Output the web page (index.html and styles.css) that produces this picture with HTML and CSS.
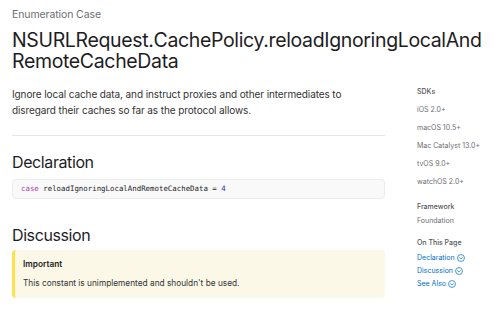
FILE: index.html
```html
<!DOCTYPE html>
<html lang="en">
<head>
    <meta charset="UTF-8">
    <meta name="viewport" content="width=device-width, initial-scale=1.0">
    <title>NSURLRequest.CachePolicy.reloadIgnoringLocalAndRemoteCacheData</title>
    <link rel="stylesheet" href="styles.css">
</head>
<body>
    <div class="page">
        <main class="content">
            <div class="eyebrow">Enumeration Case</div>
            <h1 class="title">NSURLRequest.<wbr>CachePolicy.<wbr>reloadIgnoringLocalAnd<wbr>RemoteCacheData</h1>
            <p class="abstract">Ignore local cache data, and instruct proxies and other intermediates to disregard their caches so far as the protocol allows.</p>
            <hr class="divider">

            <h2>Declaration</h2>
            <pre class="code"><span class="kw">case</span> reloadIgnoringLocalAndRemoteCacheData = <span class="num">4</span></pre>

            <h2 class="discussion">Discussion</h2>
            <div class="aside">
                <div class="aside-label">Important</div>
                <p>This constant is unimplemented and shouldn't be used.</p>
            </div>
        </main>

        <aside class="summary">
            <div class="label">SDKs</div>
            <ul class="sdks">
                <li>iOS 2.0+</li>
                <li>macOS 10.5+</li>
                <li>Mac Catalyst 13.0+</li>
                <li>tvOS 9.0+</li>
                <li>watchOS 2.0+</li>
            </ul>

            <div class="label framework">Framework</div>
            <div class="value">Foundation</div>

            <div class="label on-page">On This Page</div>
            <ul class="links">
                <li><a href="#">Declaration <svg class="chev" viewBox="0 0 10 10"><circle cx="5" cy="5" r="4.3"/><path d="M3 4.2 L5 6.2 L7 4.2"/></svg></a></li>
                <li><a href="#">Discussion <svg class="chev" viewBox="0 0 10 10"><circle cx="5" cy="5" r="4.3"/><path d="M3 4.2 L5 6.2 L7 4.2"/></svg></a></li>
                <li><a href="#">See Also <svg class="chev" viewBox="0 0 10 10"><circle cx="5" cy="5" r="4.3"/><path d="M3 4.2 L5 6.2 L7 4.2"/></svg></a></li>
            </ul>
        </aside>
    </div>
</body>
</html>
```

FILE: styles.css
```css
body {
    margin: 0;
    font-family: 'Inter', 'Liberation Sans', sans-serif;
    color: #1d1d1f;
    background: white;
}

.page {
    display: flex;
    width: 500px;
    overflow: hidden;
}

.content {
    width: 373px;
    padding-left: 12px;
    flex-shrink: 0;
}

.eyebrow {
    padding-top: 8px;
    font-size: 10.5px;
    line-height: 14px;
    letter-spacing: -0.1px;
    color: #6e6e73;
}

.title {
    margin: 7.5px 0 0;
    width: 488px;
    font-size: 19.5px;
    font-weight: normal;
    line-height: 21px;
    letter-spacing: -0.35px;
    color: #1d1d1f;
}

.abstract {
    margin: 14.5px 0 0;
    max-width: 340px;
    font-size: 10px;
    line-height: 16px;
    letter-spacing: -0.1px;
    color: #333;
}

.divider {
    margin: 17px 0 0;
    border: none;
    border-top: 1px solid #e6e6e6;
}

h2 {
    margin: 16px 0 0;
    font-size: 16px;
    font-weight: normal;
    line-height: 20px;
    letter-spacing: -0.4px;
    color: #1d1d1f;
}

.code {
    margin: 7px 0 0;
    padding: 5px 8px;
    background: #f9f9fa;
    border: 1px solid #ececec;
    border-radius: 4px;
    font-family: 'DejaVu Sans Mono', 'Liberation Mono', monospace;
    font-size: 7.4px;
    line-height: 8px;
    color: #1d1d1f;
}

.kw {
    color: #ad3da4;
}

.num {
    color: #272ad8;
}

.discussion {
    margin-top: 26px;
}

.aside {
    margin-top: 5px;
    padding: 8px 12px 9px 8px;
    background: #fbf8e7;
    border-left: 3px solid #ffe04d;
    border-radius: 4px;
    font-size: 8.3px;
    color: #333;
}

.aside-label {
    font-weight: 600;
    line-height: 12px;
    color: #1d1d1f;
}

.aside p {
    margin: 7px 0 0;
    line-height: 12px;
}

.summary {
    margin-left: 32px;
    width: 83px;
    flex-shrink: 0;
    padding-top: 87px;
    font-size: 7px;
    line-height: 10px;
    color: #6e6e73;
}

.summary ul {
    list-style: none;
    margin: 0;
    padding: 0;
}

.label {
    font-weight: 500;
    color: #555;
}

.sdks li {
    margin-top: 8px;
}

.framework {
    margin-top: 15px;
}

.value {
    margin-top: 4px;
}

.on-page {
    margin-top: 12px;
}

.links li {
    margin-top: 3px;
}

.links li:first-child {
    margin-top: 5px;
}

.links a {
    color: #0070c9;
    text-decoration: none;
    display: inline-flex;
    align-items: center;
    gap: 2px;
}

.chev {
    width: 8px;
    height: 8px;
    fill: none;
    stroke: #0070c9;
    stroke-width: 0.9;
}
```
